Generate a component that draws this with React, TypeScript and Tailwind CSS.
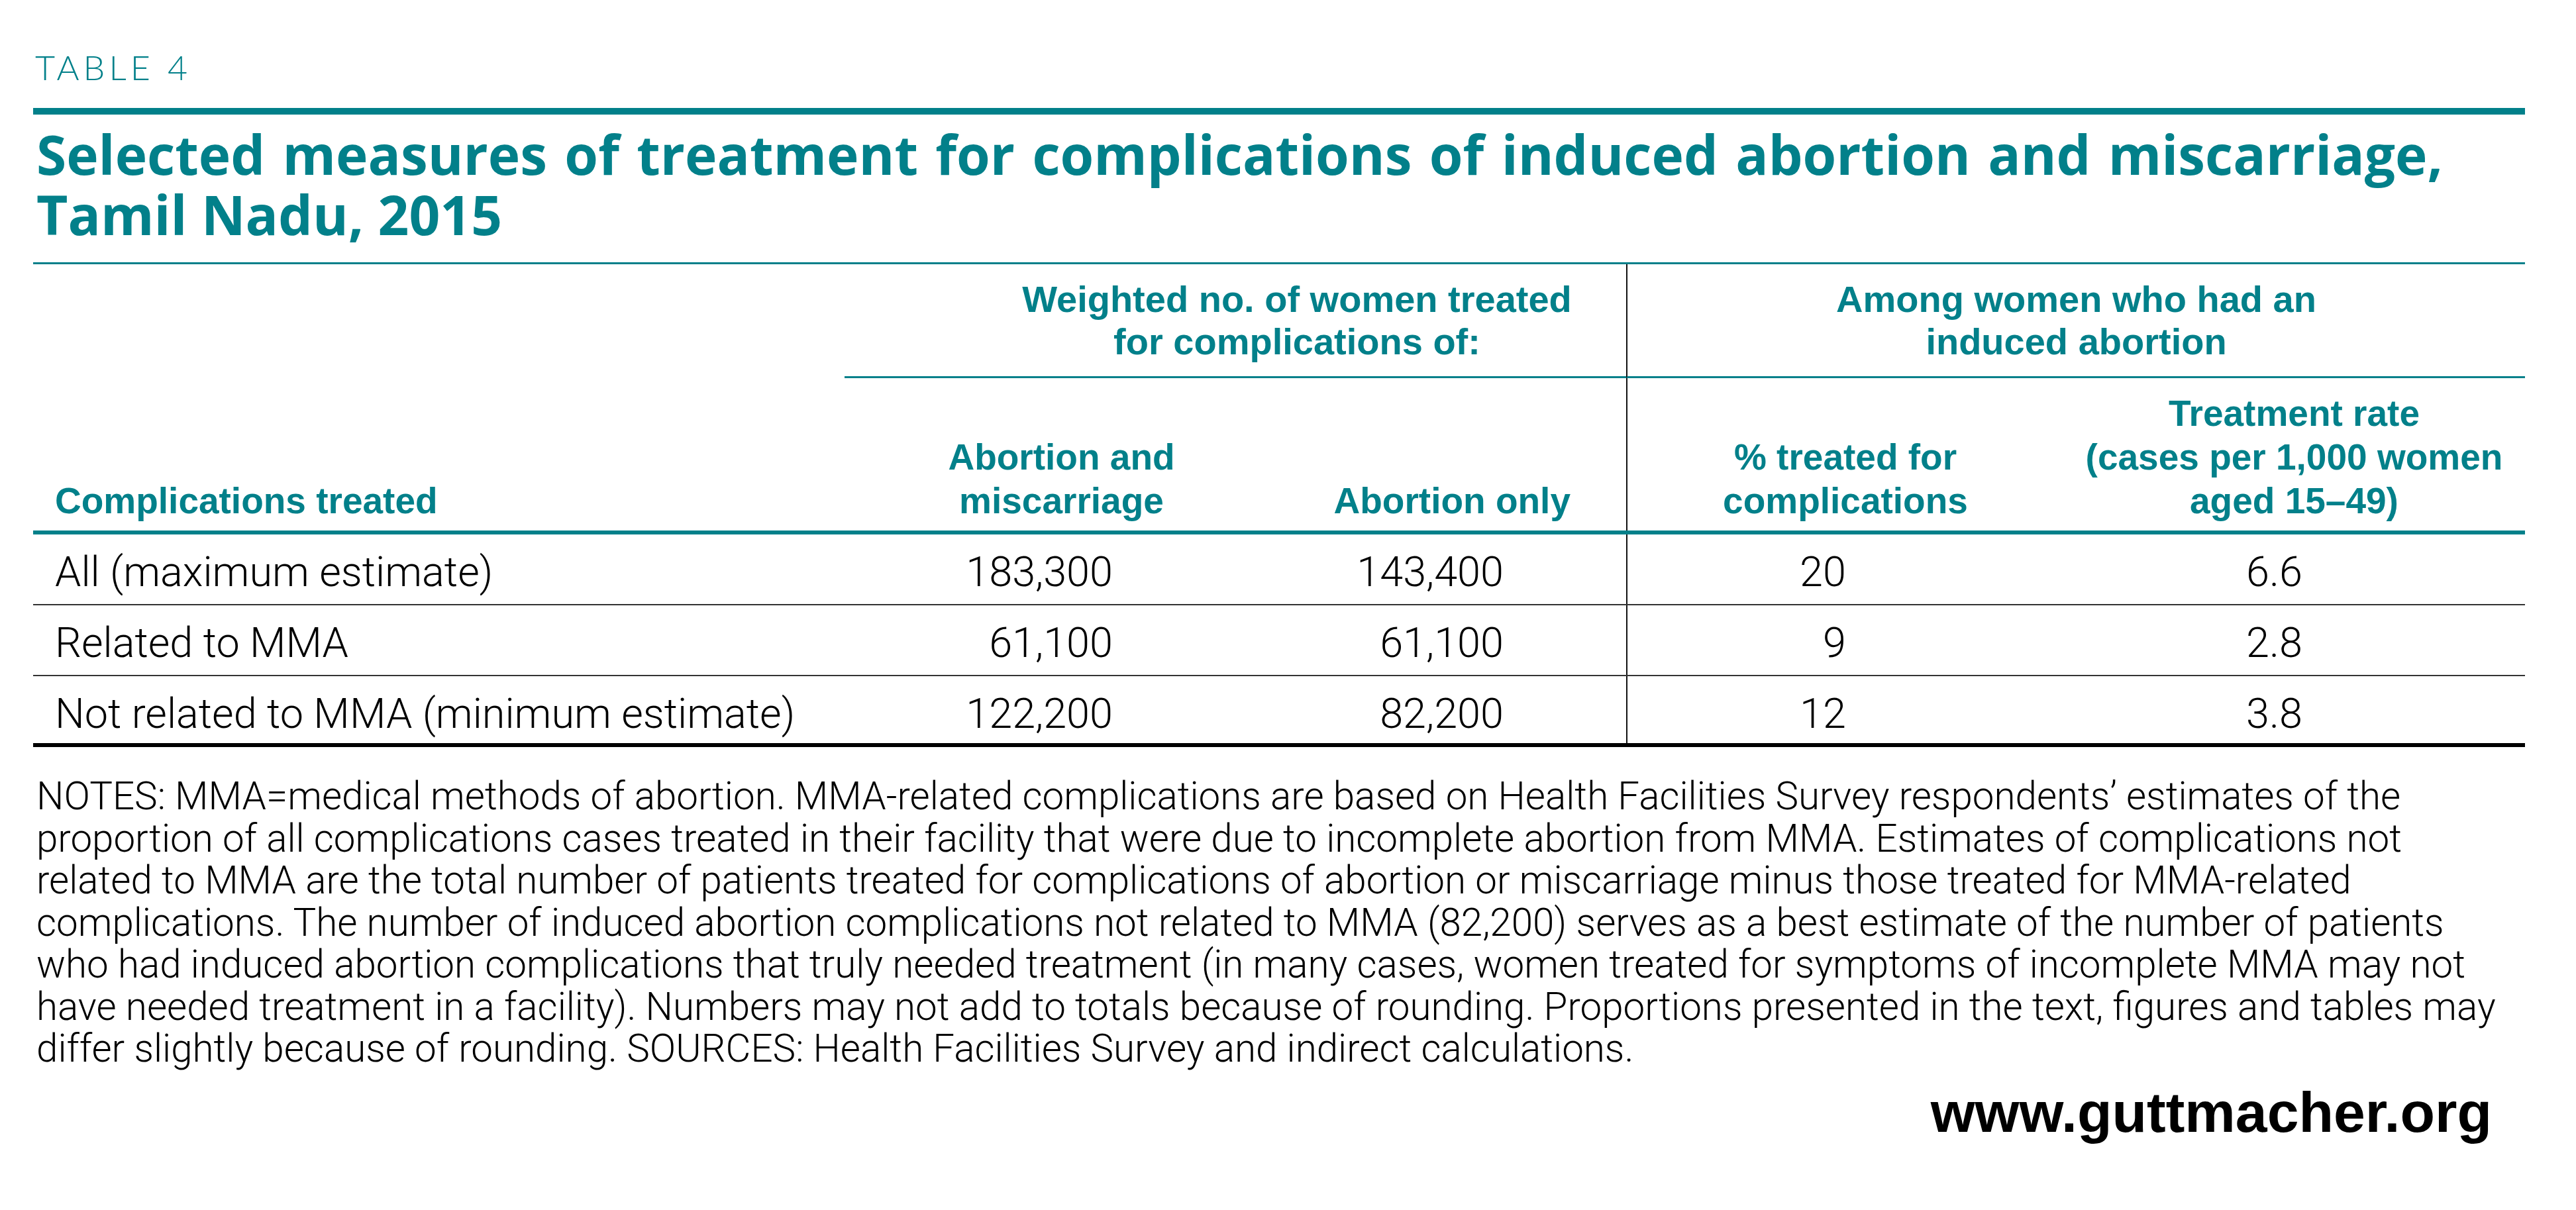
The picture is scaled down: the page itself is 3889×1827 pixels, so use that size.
import React from "react";

const notes = [
  "NOTES: MMA=medical methods of abortion. MMA-related complications are based on Health Facilities Survey respondents\u2019 estimates of the",
  "proportion of all complications cases treated in their facility that were due to incomplete abortion from MMA. Estimates of complications not",
  "related to MMA are the total number of patients treated for complications of abortion or miscarriage minus those treated for MMA-related",
  "complications. The number of induced abortion complications not related to MMA (82,200) serves as a best estimate of the number of patients",
  "who had induced abortion complications that truly needed treatment (in many cases, women treated for symptoms of incomplete MMA may not",
  "have needed treatment in a facility). Numbers may not add to totals because of rounding. Proportions presented in the text, figures and tables may",
  "differ slightly because of rounding. SOURCES: Health Facilities Survey and indirect calculations.",
];

const rows = [
  { label: "All (maximum estimate)", a: "183,300", b: "143,400", c: "20", d: "6.6" },
  { label: "Related to MMA", a: "61,100", b: "61,100", c: "9", d: "2.8" },
  { label: "Not related to MMA (minimum estimate)", a: "122,200", b: "82,200", c: "12", d: "3.8" },
];

export default function App() {
  return (
    <div className="min-h-[1827px] w-[3889px] bg-white">
      <div className="ml-[50px] w-[3762px] pt-[75px]">
        <div className="pl-[3px] font-['Lato',sans-serif] text-[52px] font-light leading-[52px] tracking-[6px] text-[#02808a]">
          TABLE 4
        </div>
        <div className="mt-[36px] h-[10px] bg-[#02808a]" />
        <h1 className="mt-[14px] pl-[5px] font-['Open_Sans',sans-serif] text-[82px] font-bold leading-[91px] text-[#02808a]">
          <span className="block whitespace-nowrap [word-spacing:5px]">
            Selected measures of treatment for complications of induced abortion and miscarriage,
          </span>
          <span className="block whitespace-nowrap">Tamil Nadu, 2015</span>
        </h1>
        <div className="mt-[27px] h-[3px] bg-[#02808a]" />

        {/* Table */}
        <div className="font-['Liberation_Sans',Arial,sans-serif]">
          {/* group header row */}
          <div className="grid grid-cols-[1225px_1180px_1357px]">
            <div />
            <div className="border-b-[3px] border-[#02808a] pb-[20px] pl-[186px] pt-[21px] text-center text-[56px] font-bold leading-[64px] text-[#02808a]">
              Weighted no. of women treated
              <br />
              for complications of:
            </div>
            <div className="border-b-[3px] border-l-2 border-b-[#02808a] border-l-[#111] pb-[20px] pt-[21px] text-center text-[56px] font-bold leading-[64px] text-[#02808a]">
              Among women who had an
              <br />
              induced abortion
            </div>
          </div>
          {/* column header row */}
          <div className="grid h-[230px] grid-cols-[1225px_655px_525px_660px_697px] text-[55px] font-bold leading-[66px] text-[#02808a]">
            <div className="flex items-end pb-[12px] pl-[33px]">Complications treated</div>
            <div className="flex items-end justify-center pb-[12px] text-center">
              <span>
                Abortion and
                <br />
                miscarriage
              </span>
            </div>
            <div className="flex items-end justify-end pb-[12px] pr-[84px] text-right">Abortion only</div>
            <div className="flex items-end justify-center border-l-2 border-[#111] pb-[12px] text-center">
              <span>
                % treated for
                <br />
                complications
              </span>
            </div>
            <div className="flex items-end justify-center pb-[12px] text-center">
              <span>
                Treatment rate
                <br />
                (cases per 1,000 women
                <br />
                aged 15–49)
              </span>
            </div>
          </div>
          <div className="h-[6px] bg-[#02808a]" />
          {/* data rows */}
          {rows.map((r, i) => (
            <div
              key={r.label}
              className={
                "grid h-[107px] grid-cols-[1225px_655px_525px_660px_697px] font-['Roboto',sans-serif] text-[63px] font-light leading-[63px] text-black " +
                (i === rows.length - 1 ? "border-b-[6px] border-black" : "border-b-2 border-[#333]")
              }
            >
              <div className="whitespace-nowrap pl-[33px] pt-[25px]">{r.label}</div>
              <div className="pr-[250px] pt-[25px] text-right">{r.a}</div>
              <div className="pr-[185px] pt-[25px] text-right">{r.b}</div>
              <div className="border-l-2 border-[#111] pr-[328px] pt-[25px] text-right">{r.c}</div>
              <div className="pr-[336px] pt-[25px] text-right">{r.d}</div>
            </div>
          ))}
        </div>

        {/* notes */}
        <div className="mt-[43px] pl-[5px] font-['Roboto',sans-serif] text-[58.3px] font-light leading-[63.5px] text-black">
          {notes.map((l) => (
            <div key={l} className="whitespace-nowrap">
              {l}
            </div>
          ))}
        </div>

        <div className="mt-[20px] pr-[50px] text-right font-['Liberation_Sans',Arial,sans-serif] text-[86px] font-bold leading-[86px] text-black">
          www.guttmacher.org
        </div>
      </div>
    </div>
  );
}
